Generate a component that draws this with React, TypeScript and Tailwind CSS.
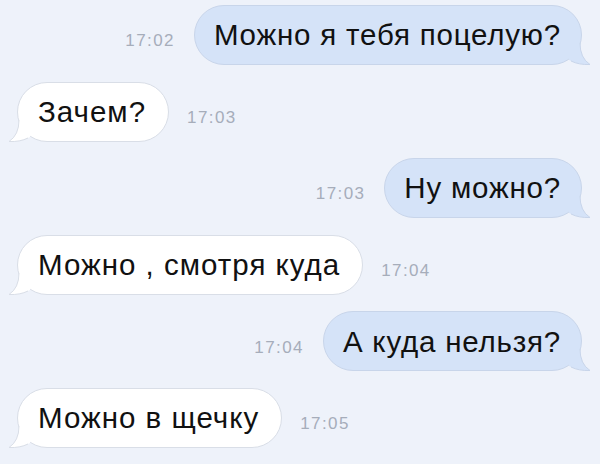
import React from 'react';

type Msg = { text: string; time: string; out: boolean };

const messages: Msg[] = [
  { text: 'Можно я тебя поцелую?', time: '17:02', out: true },
  { text: 'Зачем?', time: '17:03', out: false },
  { text: 'Ну можно?', time: '17:03', out: true },
  { text: 'Можно , смотря куда', time: '17:04', out: false },
  { text: 'А куда нельзя?', time: '17:04', out: true },
  { text: 'Можно в щечку', time: '17:05', out: false },
];

const OutTail = () => (
  <svg className="absolute -right-[10px] bottom-[-1px]" width="24" height="22" viewBox="0 0 24 22">
    <path d="M2 0 L13 0 Q13 15 23 21.5 Q12 22 2 17 Z" fill="#d5e3f8" />
    <path d="M13 0 Q13 15 23 21.5 Q12 22 4 18" fill="none" stroke="#c8d5ea" strokeWidth="1" />
  </svg>
);

const InTail = () => (
  <svg className="absolute -left-[10px] bottom-[-1px]" width="24" height="22" viewBox="0 0 24 22">
    <path d="M22 0 L11 0 Q11 15 1 21.5 Q12 22 22 17 Z" fill="#ffffff" />
    <path d="M11 0 Q11 15 1 21.5 Q12 22 20 18" fill="none" stroke="#d9dee7" strokeWidth="1" />
  </svg>
);

const Time = ({ t }: { t: string }) => (
  <span className="pt-[12px] text-[17px] text-[#a6adba] tracking-[1.4px]">{t}</span>
);

export default function App() {
  return (
    <div
      className="w-[600px] h-[464px] overflow-hidden bg-[#eef2fa] flex flex-col gap-[16.6px] pt-[5px] pl-[17px] pr-[18px]"
      style={{ fontFamily: '"Liberation Sans", Arial, sans-serif' }}
    >
      {messages.map((m, i) =>
        m.out ? (
          <div key={i} className="flex items-center justify-end gap-[19px]">
            <Time t={m.time} />
            <div className="relative h-[60px] flex items-center pl-[19px] pr-[20px] rounded-[30px] bg-[#d5e3f8] border border-[#c8d5ea] text-[29.5px] tracking-[0.8px] text-[#111] leading-none">
              <OutTail />
              <span className="relative">{m.text}</span>
            </div>
          </div>
        ) : (
          <div key={i} className="flex items-center gap-[18px]">
            <div className="relative h-[60px] flex items-center pl-[20px] pr-[22px] rounded-[30px] bg-white border border-[#d9dee7] text-[29.5px] tracking-[1px] text-[#111] leading-none">
              <InTail />
              <span className="relative">{m.text}</span>
            </div>
            <Time t={m.time} />
          </div>
        )
      )}
    </div>
  );
}
